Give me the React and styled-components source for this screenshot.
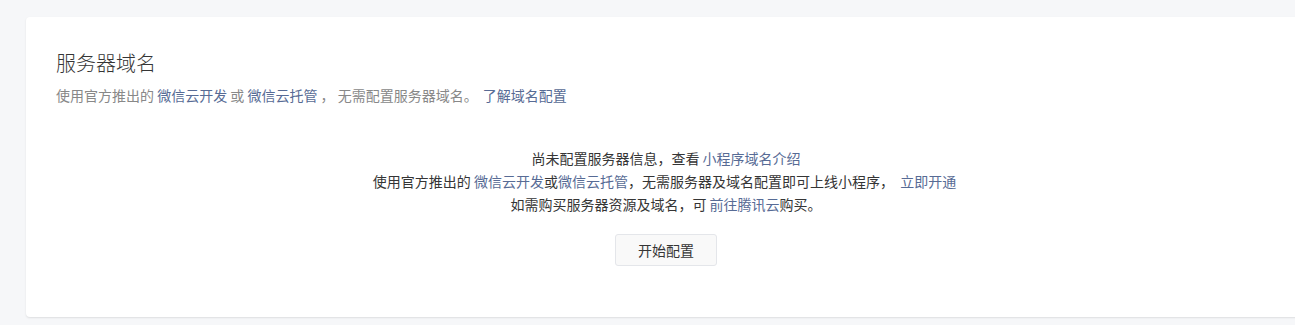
import React from 'react'
import styled, { createGlobalStyle } from 'styled-components'

const GlobalStyle = createGlobalStyle`
  html, body {
    margin: 0;
    padding: 0;
    background: #f6f7f9;
    font-family: "Noto Sans CJK SC", "Noto Sans", sans-serif;
    overflow: hidden;
  }
`

const Page = styled.div`
  padding: 17px 0 0 26px;
  height: 325px;
  box-sizing: border-box;
`

const Card = styled.div`
  width: 1280px;
  box-sizing: border-box;
  background: #fff;
  border-radius: 4px;
  box-shadow: 0 1px 2px rgba(0, 0, 0, 0.1);
  padding: 32px 30px 51px;
`

const Title = styled.h2`
  margin: 0;
  font-size: 20px;
  font-weight: 300;
  line-height: 28px;
  color: #353535;
`

const Desc = styled.p`
  margin: 8px 0 0;
  font-size: 14px;
  line-height: 20px;
  color: #888;
`

const Link = styled.a`
  color: #576b95;
  text-decoration: none;
  margin: 0 ${p => p.gap || 0}px;
`

const Empty = styled.div`
  margin-top: 42px;
  display: flex;
  flex-direction: column;
  align-items: center;
`

const Line = styled.p`
  margin: 0;
  font-size: 14px;
  line-height: 23px;
  color: #353535;
  text-align: center;
`

const Button = styled.button`
  margin-top: 18px;
  width: 102px;
  height: 32px;
  border: 1px solid #e4e6ea;
  border-radius: 3px;
  background: #f9f9f9;
  color: #353535;
  font-family: inherit;
  font-size: 14px;
  cursor: pointer;
`

export default function App () {
  return (
    <Page>
      <GlobalStyle />
      <Card>
        <Title>服务器域名</Title>
        <Desc>
          使用官方推出的 <Link>微信云开发</Link> 或 <Link>微信云托管</Link> ， 无需配置服务器域名。 <Link gap={2}>了解域名配置</Link>
        </Desc>
        <Empty>
          <Line>尚未配置服务器信息，查看 <Link>小程序域名介绍</Link></Line>
          <Line>
            使用官方推出的 <Link>微信云开发</Link>或<Link>微信云托管</Link>，无需服务器及域名配置即可上线小程序， <Link gap={3}>立即开通</Link>
          </Line>
          <Line>如需购买服务器资源及域名，可 <Link>前往腾讯云</Link>购买。</Line>
          <Button>开始配置</Button>
        </Empty>
      </Card>
    </Page>
  )
}
